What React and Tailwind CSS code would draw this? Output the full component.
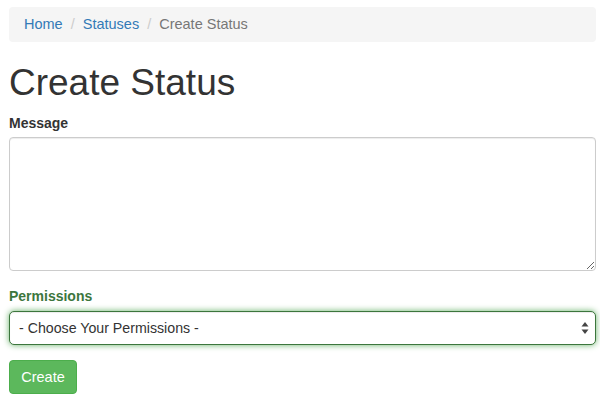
import React from "react";

export default function App() {
  return (
    <div className="min-h-screen bg-white pl-[9px] pr-[4px] pt-[7px] text-[14px] leading-[20px] text-[#333] [font-family:'Liberation_Sans',Arial,sans-serif]">
      {/* breadcrumb */}
      <ol className="flex items-center rounded-[4px] bg-[#f5f5f5] px-[15px] py-[8px] text-[14.5px] leading-[19px]">
        <li>
          <a href="#" className="text-[#337ab7]">Home</a>
        </li>
        <li className="px-[8px] text-[#ccc]">/</li>
        <li>
          <a href="#" className="text-[#337ab7]">Statuses</a>
        </li>
        <li className="px-[8px] text-[#ccc]">/</li>
        <li className="text-[#777]">Create Status</li>
      </ol>

      <h1 className="mt-[20px] mb-[10px] text-[37px] leading-[41px] font-normal text-[#333]">
        Create Status
      </h1>

      <form className="flex flex-col">
        <label className="mb-[4px] font-bold">Message</label>
        <textarea
          className="h-[134px] w-full rounded-[4px] border border-[#ccc] px-[12px] py-[6px] shadow-[inset_0_1px_1px_rgba(0,0,0,0.075)] outline-none"
        />

        <label className="mt-[15px] mb-[5px] font-bold text-[#3c763d]">Permissions</label>
        <div className="relative">
          <select className="h-[34px] w-full appearance-none rounded-[5px] border border-[#3c763d] bg-white px-[9px] text-[14.2px] text-[#333] shadow-[inset_0_1px_1px_rgba(0,0,0,0.075),0_0_6px_#67b168] outline-none">
            <option>- Choose Your Permissions -</option>
          </select>
          <svg
            className="pointer-events-none absolute right-[7px] top-[11px] h-[12px] w-[8px] text-[#444]"
            viewBox="0 0 8 12"
            fill="currentColor"
            aria-hidden="true"
          >
            <polygon points="4,0 7.5,4.5 0.5,4.5" />
            <polygon points="0.5,7.5 7.5,7.5 4,12" />
          </svg>
        </div>

        <div className="mt-[15px]">
          <button
            type="button"
            className="h-[34px] w-[68px] rounded-[4px] border border-[#4cae4c] bg-[#5cb85c] text-[14.5px] text-white"
          >
            Create
          </button>
        </div>
      </form>
    </div>
  );
}
